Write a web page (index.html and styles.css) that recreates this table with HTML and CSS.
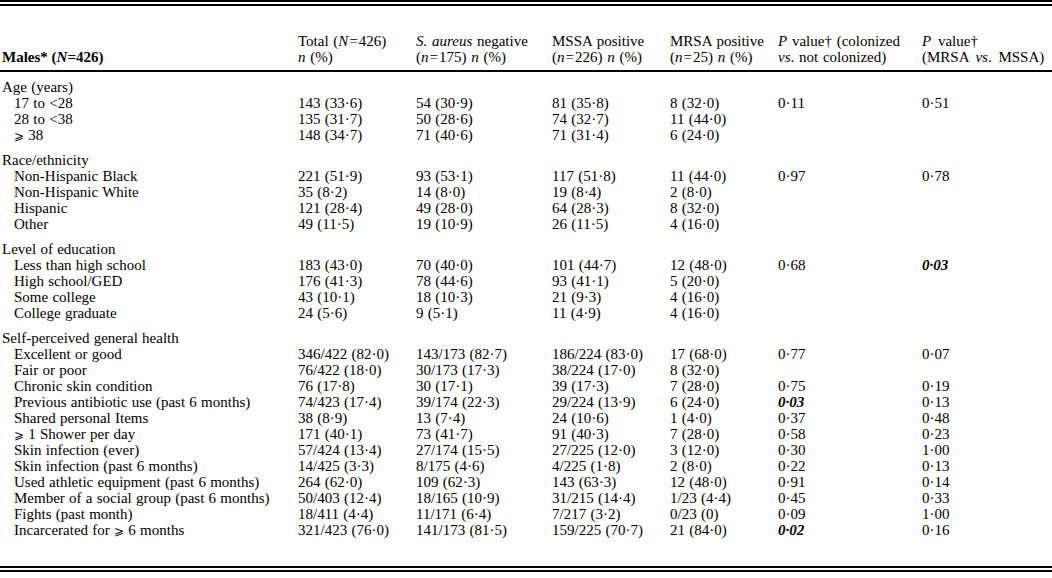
FILE: index.html
```html
<!DOCTYPE html>
<html>
<head>
<meta charset="utf-8">
<link rel="stylesheet" href="styles.css">
</head>
<body>
<div class="frame">
<table class="data">
<colgroup>
<col class="c-label"><col class="c-total"><col class="c-neg"><col class="c-mssa"><col class="c-mrsa"><col class="c-p1"><col class="c-p2">
</colgroup>
<thead>
<tr>
<th class="first"><b>Males* (<i>N</i>=426)</b></th>
<th>Total (<i>N</i><span class="eq">=</span>426)<br><i>n</i> (%)</th>
<th><i>S. aureus</i> negative<br>(<i>n</i><span class="eq">=</span>175) <i>n</i> (%)</th>
<th>MSSA positive<br>(<i>n</i><span class="eq">=</span>226) <i>n</i> (%)</th>
<th>MRSA positive<br>(<i>n</i><span class="eq">=</span>25) <i>n</i> (%)</th>
<th><i>P</i> value† (colonized<br><i>vs</i>. not colonized)</th>
<th class="wide"><i>P</i>&nbsp;value†<br>(MRSA <i>vs</i>. MSSA)</th>
</tr>
</thead>
<tbody>
<tr class="sec top"><td>Age (years)</td><td></td><td></td><td></td><td></td><td></td><td></td></tr>
<tr><td class="sub">17 to &lt;28</td><td>143 (33·6)</td><td>54 (30·9)</td><td>81 (35·8)</td><td>8 (32·0)</td><td>0·11</td><td>0·51</td></tr>
<tr><td class="sub">28 to &lt;38</td><td>135 (31·7)</td><td>50 (28·6)</td><td>74 (32·7)</td><td>11 (44·0)</td><td></td><td></td></tr>
<tr><td class="sub"><span class="ge">⩾</span> 38</td><td>148 (34·7)</td><td>71 (40·6)</td><td>71 (31·4)</td><td>6 (24·0)</td><td></td><td></td></tr>

<tr class="sec"><td>Race/ethnicity</td><td></td><td></td><td></td><td></td><td></td><td></td></tr>
<tr><td class="sub">Non-Hispanic Black</td><td>221 (51·9)</td><td>93 (53·1)</td><td>117 (51·8)</td><td>11 (44·0)</td><td>0·97</td><td>0·78</td></tr>
<tr><td class="sub">Non-Hispanic White</td><td>35 (8·2)</td><td>14 (8·0)</td><td>19 (8·4)</td><td>2 (8·0)</td><td></td><td></td></tr>
<tr><td class="sub">Hispanic</td><td>121 (28·4)</td><td>49 (28·0)</td><td>64 (28·3)</td><td>8 (32·0)</td><td></td><td></td></tr>
<tr><td class="sub">Other</td><td>49 (11·5)</td><td>19 (10·9)</td><td>26 (11·5)</td><td>4 (16·0)</td><td></td><td></td></tr>

<tr class="sec"><td>Level of education</td><td></td><td></td><td></td><td></td><td></td><td></td></tr>
<tr><td class="sub">Less than high school</td><td>183 (43·0)</td><td>70 (40·0)</td><td>101 (44·7)</td><td>12 (48·0)</td><td>0·68</td><td><b><i>0·03</i></b></td></tr>
<tr><td class="sub">High school/GED</td><td>176 (41·3)</td><td>78 (44·6)</td><td>93 (41·1)</td><td>5 (20·0)</td><td></td><td></td></tr>
<tr><td class="sub">Some college</td><td>43 (10·1)</td><td>18 (10·3)</td><td>21 (9·3)</td><td>4 (16·0)</td><td></td><td></td></tr>
<tr><td class="sub">College graduate</td><td>24 (5·6)</td><td>9 (5·1)</td><td>11 (4·9)</td><td>4 (16·0)</td><td></td><td></td></tr>

<tr class="sec"><td>Self-perceived general health</td><td></td><td></td><td></td><td></td><td></td><td></td></tr>
<tr><td class="sub">Excellent or good</td><td>346/422 (82·0)</td><td>143/173 (82·7)</td><td>186/224 (83·0)</td><td>17 (68·0)</td><td>0·77</td><td>0·07</td></tr>
<tr><td class="sub">Fair or poor</td><td>76/422 (18·0)</td><td>30/173 (17·3)</td><td>38/224 (17·0)</td><td>8 (32·0)</td><td></td><td></td></tr>
<tr><td class="sub">Chronic skin condition</td><td>76 (17·8)</td><td>30 (17·1)</td><td>39 (17·3)</td><td>7 (28·0)</td><td>0·75</td><td>0·19</td></tr>
<tr><td class="sub">Previous antibiotic use (past 6 months)</td><td>74/423 (17·4)</td><td>39/174 (22·3)</td><td>29/224 (13·9)</td><td>6 (24·0)</td><td><b><i>0·03</i></b></td><td>0·13</td></tr>
<tr><td class="sub">Shared personal Items</td><td>38 (8·9)</td><td>13 (7·4)</td><td>24 (10·6)</td><td>1 (4·0)</td><td>0·37</td><td>0·48</td></tr>
<tr><td class="sub"><span class="ge">⩾</span> 1 Shower per day</td><td>171 (40·1)</td><td>73 (41·7)</td><td>91 (40·3)</td><td>7 (28·0)</td><td>0·58</td><td>0·23</td></tr>
<tr><td class="sub">Skin infection (ever)</td><td>57/424 (13·4)</td><td>27/174 (15·5)</td><td>27/225 (12·0)</td><td>3 (12·0)</td><td>0·30</td><td>1·00</td></tr>
<tr><td class="sub">Skin infection (past 6 months)</td><td>14/425 (3·3)</td><td>8/175 (4·6)</td><td>4/225 (1·8)</td><td>2 (8·0)</td><td>0·22</td><td>0·13</td></tr>
<tr><td class="sub">Used athletic equipment (past 6 months)</td><td>264 (62·0)</td><td>109 (62·3)</td><td>143 (63·3)</td><td>12 (48·0)</td><td>0·91</td><td>0·14</td></tr>
<tr><td class="sub">Member of a social group (past 6 months)</td><td>50/403 (12·4)</td><td>18/165 (10·9)</td><td>31/215 (14·4)</td><td>1/23 (4·4)</td><td>0·45</td><td>0·33</td></tr>
<tr><td class="sub">Fights (past month)</td><td>18/411 (4·4)</td><td>11/171 (6·4)</td><td>7/217 (3·2)</td><td>0/23 (0)</td><td>0·09</td><td>1·00</td></tr>
<tr class="last"><td class="sub">Incarcerated for <span class="ge">⩾</span> 6 months</td><td>321/423 (76·0)</td><td>141/173 (81·5)</td><td>159/225 (70·7)</td><td>21 (84·0)</td><td><b><i>0·02</i></b></td><td>0·16</td></tr>
</tbody>
</table>
</div>
</body>
</html>
```

FILE: styles.css
```css
html, body {
  margin: 0;
  padding: 0;
  background: #fff;
}
body {
  font-family: "Liberation Serif", "DejaVu Serif", serif;
  font-size: 15px;
  color: #000;
}
.frame {
  width: 1052px;
  border-top: 6px double #000;
  border-bottom: 6px double #000;
  box-sizing: border-box;
}
.data {
  width: 1052px;
  border-collapse: collapse;
  table-layout: fixed;
}
.c-label { width: 298px; }
.c-total { width: 118px; }
.c-neg { width: 136px; }
.c-mssa { width: 118px; }
.c-mrsa { width: 108px; }
.c-p1 { width: 144px; }
.c-p2 { width: 130px; }

.data th,
.data td {
  padding: 0;
  height: 16px;
  line-height: 16px;
  text-align: left;
  white-space: nowrap;
  vertical-align: top;
}
.data td {
  word-spacing: 0.5px;
}
.data th {
  font-weight: normal;
  vertical-align: bottom;
  padding-top: 27px;
  padding-bottom: 5px;
  border-bottom: 2px solid #000;
  word-spacing: 1px;
}
.data th.wide {
  word-spacing: 3px;
}
.data th.first {
  padding-left: 2px;
  word-spacing: 0;
}
.eq {
  margin: 0 1px;
}
.ge {
  font-family: "DejaVu Serif", serif;
  font-size: 12px;
  line-height: 1;
  vertical-align: baseline;
}
.data td:first-child {
  padding-left: 2px;
}
.data td.sub {
  padding-left: 14px;
}
.sec td {
  padding-top: 9px;
}
.sec.top td {
  padding-top: 7px;
}
.last td {
  padding-bottom: 28px;
}
```
